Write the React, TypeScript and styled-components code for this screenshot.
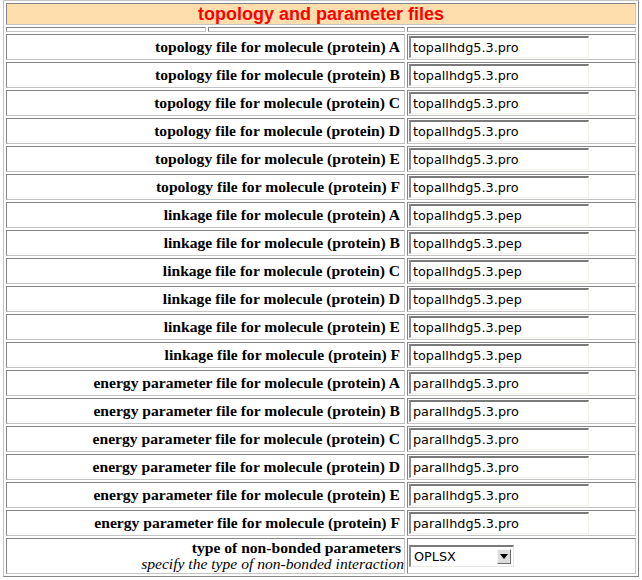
import React from "react";
import styled, { createGlobalStyle } from "styled-components";

const Global = createGlobalStyle`
  html, body { margin: 0; padding: 0; background: #ffffff; }
  body { font-family: "Liberation Serif", "Times New Roman", serif; }
`;

const Table = styled.table`
  margin: 0 0 0 3px;
  width: 636px;
  table-layout: fixed;
  border-collapse: separate;
  border-spacing: 2px;
  border-style: solid;
  border-width: 1px;
  border-color: #c4c4c4 #858585 #858585 #c4c4c4;
`;

const Cell = styled.td`
  box-sizing: border-box;
  border-style: solid;
  border-width: 1px;
  border-color: #858585 #c4c4c4 #c4c4c4 #858585;
  padding: 1px;
`;

const HeaderCell = styled(Cell)`
  height: 22px;
  padding: 0;
  background: #ffdead;
  text-align: center;
  vertical-align: middle;
  font-family: "Liberation Sans", Arial, sans-serif;
  font-weight: bold;
  font-size: 18px;
  line-height: 20px;
  color: #ff0000;
`;

const SpacerCell = styled(Cell)`
  height: 5px;
  padding: 0;
`;

const LabelCell = styled(Cell)<{ $tall?: boolean }>`
  height: ${(p) => (p.$tall ? 36 : 26)}px;
  padding: ${(p) => (p.$tall ? "0 0 1px 1px" : "1px 4px 2px 1px")};
  text-align: right;
  vertical-align: middle;
  font-family: "Liberation Serif", "Times New Roman", serif;
  font-weight: bold;
  font-size: 15.6px;
  line-height: ${(p) => (p.$tall ? 16 : 18)}px;
  color: #000;
  white-space: nowrap;
`;

const MainLine = styled.span`
  display: block;
  padding-right: 3px;
`;

const Hint = styled.i`
  display: block;
  font-weight: normal;
`;

const FieldCell = styled(Cell)`
  vertical-align: middle;
`;

const TextInput = styled.input`
  display: block;
  box-sizing: border-box;
  width: 180px;
  height: 22px;
  margin: 0;
  padding: 0 2px 0 2px;
  border-style: solid;
  border-width: 2px 1px 1px 2px;
  border-color: #7a7a7a #f2f2ea #f2f2ea #8a8a8a;
  background: #ffffff;
  font-family: "DejaVu Sans", Verdana, sans-serif;
  font-size: 12.8px;
  color: #000;
  outline: none;
`;

const SelectBox = styled.div`
  display: flex;
  align-items: center;
  box-sizing: border-box;
  width: 105px;
  height: 22px;
  border-style: solid;
  border-width: 2px 1px 1px 2px;
  border-color: #7a7a7a #e8e8e8 #e8e8e8 #8a8a8a;
  background: #ffffff;
`;

const NativeSelect = styled.select`
  flex: 1;
  min-width: 0;
  height: 100%;
  appearance: none;
  -webkit-appearance: none;
  border: none;
  background: transparent;
  padding: 0 0 0 3px;
  margin: 0;
  font-family: "DejaVu Sans", Verdana, sans-serif;
  font-size: 12.8px;
  color: #000;
  outline: none;
`;

const ArrowButton = styled.span`
  display: flex;
  align-items: center;
  justify-content: center;
  box-sizing: border-box;
  width: 14px;
  height: 15px;
  margin-right: 2px;
  background: #dcdcdc;
  border-style: solid;
  border-width: 1px;
  border-color: #f4f4f4 #6e6e6e #6e6e6e #f4f4f4;
`;

const labels: [string, string][] = [
  ["topology file for molecule (protein) A", "topallhdg5.3.pro"],
  ["topology file for molecule (protein) B", "topallhdg5.3.pro"],
  ["topology file for molecule (protein) C", "topallhdg5.3.pro"],
  ["topology file for molecule (protein) D", "topallhdg5.3.pro"],
  ["topology file for molecule (protein) E", "topallhdg5.3.pro"],
  ["topology file for molecule (protein) F", "topallhdg5.3.pro"],
  ["linkage file for molecule (protein) A", "topallhdg5.3.pep"],
  ["linkage file for molecule (protein) B", "topallhdg5.3.pep"],
  ["linkage file for molecule (protein) C", "topallhdg5.3.pep"],
  ["linkage file for molecule (protein) D", "topallhdg5.3.pep"],
  ["linkage file for molecule (protein) E", "topallhdg5.3.pep"],
  ["linkage file for molecule (protein) F", "topallhdg5.3.pep"],
  ["energy parameter file for molecule (protein) A", "parallhdg5.3.pro"],
  ["energy parameter file for molecule (protein) B", "parallhdg5.3.pro"],
  ["energy parameter file for molecule (protein) C", "parallhdg5.3.pro"],
  ["energy parameter file for molecule (protein) D", "parallhdg5.3.pro"],
  ["energy parameter file for molecule (protein) E", "parallhdg5.3.pro"],
  ["energy parameter file for molecule (protein) F", "parallhdg5.3.pro"],
];

export default function App() {
  return (
    <>
      <Global />
      <Table>
        <colgroup>
          <col style={{ width: 200 }} />
          <col style={{ width: 197 }} />
          <col style={{ width: 229 }} />
        </colgroup>
        <tbody>
          <tr>
            <HeaderCell colSpan={3}>topology and parameter files</HeaderCell>
          </tr>
          <tr>
            <SpacerCell />
            <SpacerCell />
            <SpacerCell />
          </tr>
          {labels.map(([label, value]) => (
            <tr key={label}>
              <LabelCell colSpan={2}>{label}</LabelCell>
              <FieldCell>
                <TextInput type="text" defaultValue={value} />
              </FieldCell>
            </tr>
          ))}
          <tr>
            <LabelCell colSpan={2} $tall>
              <MainLine>type of non-bonded parameters</MainLine>
              <Hint>specify the type of non-bonded interaction</Hint>
            </LabelCell>
            <FieldCell>
              <SelectBox>
                <NativeSelect defaultValue="OPLSX">
                  <option value="PROLSQ">PROLSQ</option>
                  <option value="PARMALLH6">PARMALLH6</option>
                  <option value="PARALLHDG">PARALLHDG</option>
                  <option value="OPLSX">OPLSX</option>
                </NativeSelect>
                <ArrowButton>
                  <svg width="8" height="5" viewBox="0 0 8 5">
                    <polygon points="0,0 8,0 4,5" fill="#000" />
                  </svg>
                </ArrowButton>
              </SelectBox>
            </FieldCell>
          </tr>
        </tbody>
      </Table>
    </>
  );
}
